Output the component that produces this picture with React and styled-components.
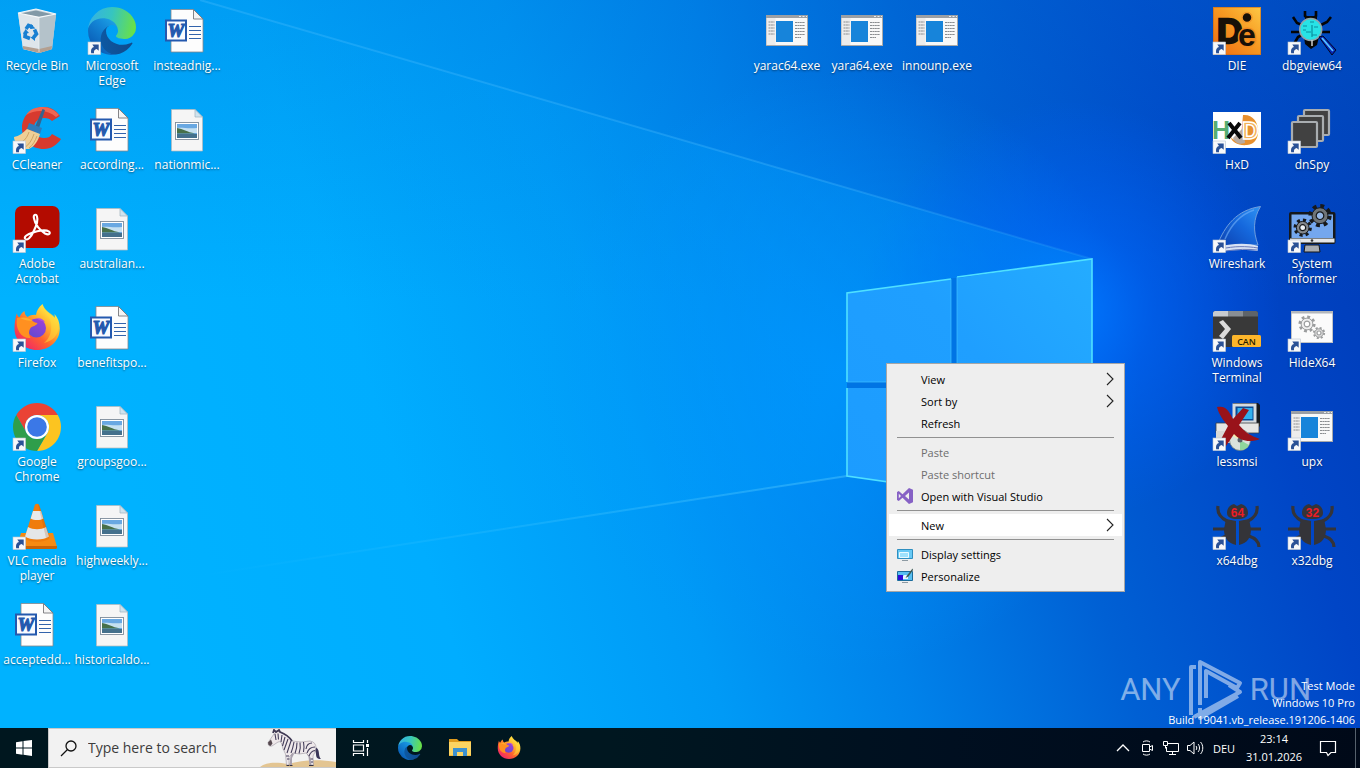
import React from "react";
import styled, { createGlobalStyle } from "styled-components";

const uiFont = '"Open Sans", "Noto Sans", sans-serif';

const GlobalStyle = createGlobalStyle`
  * { box-sizing: border-box; }
  html, body { margin: 0; padding: 0; }
  body { font-family: ${uiFont}; font-size: 11px; background: #0078d7; }
  button, input { font: inherit; }
`;

/* ---------- page frame ---------- */

const Screen = styled.div`
  position: relative;
  isolation: isolate;
  display: flex;
  flex-direction: column;
  min-height: 100vh;
  overflow: hidden;
`;

const WallpaperSvg = styled.svg`
  position: absolute;
  inset: 0;
  z-index: -1;
  width: 100%;
  height: 100%;
`;

const Desktop = styled.main`
  flex: 1;
  display: grid;
  grid-template-columns: repeat(auto-fill, 75px);
  grid-template-rows: repeat(7, 99px);
`;

/* ---------- desktop icons ---------- */

const Shortcut = styled.button`
  grid-column: ${(p) => p.$col};
  grid-row: ${(p) => p.$row};
  display: flex;
  flex-direction: column;
  align-items: center;
  gap: 3px;
  padding: 7px 1px 0 0;
  border: 0;
  background: none;
  color: #fff;
`;

const ShortcutArt = styled.svg`
  display: block;
  width: 48px;
  height: 48px;
  flex: none;
  overflow: visible;
`;

const ShortcutLabel = styled.span`
  font-size: 12px;
  line-height: 15px;
  text-align: center;
  text-shadow: 0 1px 2px rgba(0, 0, 0, 0.5);
`;

/* ---------- context menu ---------- */

const Menu = styled.ul`
  position: absolute;
  left: 886px;
  top: 363px;
  width: 239px;
  margin: 0;
  padding: 4px 2px;
  list-style: none;
  background: #eeeeee;
  border: 1px solid #a6a6a6;
`;

const MenuRow = styled.li`
  display: block;
`;

const MenuButton = styled.button`
  display: grid;
  grid-template-columns: 16px 1fr 8px;
  align-items: center;
  column-gap: 8px;
  width: 100%;
  height: 22px;
  padding: 0 8px;
  border: 0;
  text-align: left;
  color: #000;
  background: ${(p) => (p.$active ? "#fff" : "transparent")};
  &:disabled { color: #6d6d6d; }
`;

const MenuSlot = styled.svg`
  display: block;
  width: ${(p) => p.$w}px;
  height: 16px;
`;

const MenuLine = styled.li`
  height: 1px;
  margin: 3px 8px;
  background: #919191;
`;

/* ---------- watermark and build text ---------- */

const Watermark = styled.div`
  position: absolute;
  right: 49px;
  bottom: 47px;
  display: flex;
  align-items: center;
  gap: 7px;
  color: rgba(255, 255, 255, 0.5);
  font-family: "Liberation Sans Narrow", "Roboto", sans-serif;
  font-size: 31px;
  font-weight: 400;
  line-height: 40px;
`;

const WatermarkMark = styled.svg`
  display: block;
  width: 55px;
  height: 63px;
`;

const BuildInfo = styled.div`
  position: absolute;
  right: 5px;
  bottom: 40px;
  display: grid;
  justify-items: end;
  color: #fff;
  line-height: 17px;
`;

/* ---------- taskbar ---------- */

const Taskbar = styled.footer`
  display: flex;
  align-items: stretch;
  height: 40px;
  color: #fff;
  background: linear-gradient(90deg, #00171f, #001720 45%, #000f20 70%, #000918);
`;

const TaskButton = styled.button`
  display: grid;
  place-items: center;
  width: ${(p) => p.$w}px;
  padding: 0;
  border: 0;
  color: #fff;
  background: none;
`;

const BarIcon = styled.svg`
  display: block;
  width: ${(p) => p.$s}px;
  height: ${(p) => p.$s}px;
`;

const SearchBox = styled.label`
  display: flex;
  align-items: center;
  width: 288px;
  padding-left: 11px;
  background: #f2f2f2;
  border: 1px solid #c9c9c9;
  border-right: 0;
`;

const SearchInput = styled.input`
  flex: 1;
  min-width: 0;
  margin-left: 10px;
  padding: 0;
  border: 0;
  outline: 0;
  background: none;
  font-size: 14px;
  line-height: 20px;
  &::placeholder { color: #3c3c3c; opacity: 1; }
`;

const ZebraArt = styled.svg`
  display: block;
  width: 76px;
  height: 38px;
`;

const Tray = styled.div`
  display: flex;
  align-items: stretch;
  margin-left: auto;
`;

const Clock = styled.time`
  display: grid;
  align-content: center;
  justify-items: center;
  width: 66px;
  line-height: 18px;
`;

const ShowDesktop = styled.button`
  width: 5px;
  margin-left: 6px;
  padding: 0;
  border: 0;
  border-left: 1px solid #56616c;
  background: none;
`;

/* ---------- icon drawings, each on a 48 x 48 field ---------- */

const ShortcutArrow = () => (
  <g>
    <rect x="0" y="35" width="12.600" height="12.600" fill="#f7f8fa" stroke="#b9c4cf" strokeWidth=".6" />
    <path d="M3.200 46.200C2.600 42.200 4 40.500 6 40L4.300 37.600h6.400v6.200l-2-1.900C6.800 42.200 5.600 43.600 6 46.200z" fill="#2a5196" />
  </g>
);

const RecycleBin = () => (
  <g>
    <path d="M5 6l18-4 20 5-4 35-13 4-16-4z" fill="#c9d5dc" />
    <path d="M5 6l21 4v36l-16-4z" fill="#dfe6ea" opacity=".95" />
    <path d="M26 10l17-3-4 35-13 4z" fill="#b4c2ca" />
    <path d="M7 6.500L23 3.500l17 4-14 2.500z" fill="#8299a7" />
    <path d="M10 39l16 3 13-3-.5 3.500-12.500 3.500-16-4z" fill="#b39f90" />
    <path d="M5 6l18-4 20 5-17 3.300z" fill="none" stroke="#f5f8fa" strokeWidth="1.200" />
    <path d="M26 11v34" stroke="#eef2f4" strokeWidth=".7" />
    <g fill="none" stroke="#1980d2" strokeWidth="3.600">
      <path d="M13 22l2.500-3.500 4 1.500" />
      <path d="M21.500 22.500l2 4.500-3 3.500" />
      <path d="M17 31.500l-5-2 .5-4.500" />
    </g>
    <path d="M18 17l4.500 4.500-5.500.5zM22 28v6l-4.500-3.500zM10 27l2.500-5 3.500 4z" fill="#1980d2" />
  </g>
);

const EdgeMark = ({ id }) => (
  <>
    <defs>
      <linearGradient id={`${id}a`} x1="63" y1="178" x2="241" y2="178" gradientUnits="userSpaceOnUse">
        <stop stopColor="#0c59a4" />
        <stop offset="1" stopColor="#114a8b" />
      </linearGradient>
      <linearGradient id={`${id}b`} x1="157" y1="103" x2="46" y2="225" gradientUnits="userSpaceOnUse">
        <stop stopColor="#1b9de2" />
        <stop offset=".3" stopColor="#1488d8" />
        <stop offset="1" stopColor="#0a5fb8" />
      </linearGradient>
      <linearGradient id={`${id}c`} x1="20" y1="60" x2="250" y2="110" gradientUnits="userSpaceOnUse">
        <stop stopColor="#35b3e0" />
        <stop offset=".45" stopColor="#36c5c0" />
        <stop offset="1" stopColor="#68e04a" />
      </linearGradient>
    </defs>
    <g transform="scale(.1875) translate(-4.63 -4.92)">
      <path fill={`url(#${id}a)`} d="M235.680 195.460a93.730 93.730 0 0 1-10.540 4.710 101.870 101.870 0 0 1-35.900 6.460c-47.320 0-88.540-32.550-88.540-74.320A31.480 31.480 0 0 1 117.130 105c-42.800 1.800-53.800 46.400-53.800 72.530 0 73.880 68.090 81.370 82.760 81.370 7.910 0 19.840-2.300 27-4.560l1.310-.44a128.340 128.340 0 0 0 66.600-52.800 4 4 0 0 0-5.320-5.640z" />
      <path fill={`url(#${id}b)`} d="M110.340 246.340A79.200 79.200 0 0 1 87.600 225a80.720 80.720 0 0 1 29.530-120c3.120-1.470 8.450-4.130 15.540-4a32.350 32.350 0 0 1 25.690 13 31.880 31.880 0 0 1 6.360 18.660c0-.21 24.460-79.600-80-79.600-43.900 0-80 41.660-80 78.210a130.150 130.150 0 0 0 12.110 56 128 128 0 0 0 156.380 67.110 75.550 75.550 0 0 1-62.780-8z" />
      <path fill={`url(#${id}c)`} d="M156.940 153.780c-.81 1.050-3.300 2.500-3.300 5.660 0 2.610 1.700 5.120 4.720 7.230 14.380 10 41.490 8.680 41.560 8.680a59.560 59.560 0 0 0 30.270-8.350 61.380 61.380 0 0 0 30.430-52.880c.26-22.410-8-37.310-11.340-43.910-21.190-41.450-66.930-65.290-116.670-65.290a128 128 0 0 0-128 126.200c.48-36.540 36.800-66.050 80-66.050 3.500 0 23.460.34 42 10.070 16.340 8.580 24.900 18.940 30.850 29.210 6.180 10.670 7.280 24.150 7.280 29.520s-2.740 13.330-7.800 19.910z" />
    </g>
  </>
);

const FirefoxMark = ({ id }) => (
  <>
    <defs>
      <linearGradient id={`${id}a`} x1="42" y1="8" x2="10" y2="44" gradientUnits="userSpaceOnUse">
        <stop stopColor="#fff04a" />
        <stop offset=".3" stopColor="#ffb52e" />
        <stop offset=".6" stopColor="#ff642c" />
        <stop offset="1" stopColor="#f0226c" />
      </linearGradient>
      <linearGradient id={`${id}b`} x1="30" y1="14" x2="18" y2="34" gradientUnits="userSpaceOnUse">
        <stop stopColor="#a040d8" />
        <stop offset="1" stopColor="#5f4ad0" />
      </linearGradient>
    </defs>
    <path fill={`url(#${id}a)`} d="M29.500 0c-4 3-6 7-6.500 11-3-.5-6 .5-8.500 2-2-1.500-3-3.500-3-6C8.500 9 7 11.500 6.500 13.500 5 12.500 4 11 4 9 2.500 13 1.500 19 1.500 24.500c0 12 10 21.500 22.500 21.500s22.800-9 22.800-21.500c0-6-2-11-5.300-14.500l.5 4C37 9 31.500 7 29.500 0z" />
    <path fill="#ffd83a" d="M29.500 0c-1 8 7 10 8.500 19 1 8-1 15-7 20 9-2 14-8 14.500-15 0-5-1-8-3.500-11-4-4-10-6-12.500-13z" opacity=".55" />
    <circle cx="23.500" cy="24" r="9.500" fill={`url(#${id}b)`} />
    <path fill="#b04fe0" d="M24 14.500c3-1 7 1 8 4-3-2-6-2-8-4z" />
    <path fill="#ff9020" d="M4 14c5-1 10-1 14 1 1 2 3 3.500 6.500 4-1 3-5 3-7 5-2 3-2 6 0 10C9 35 2 26 4 14z" />
    <path fill="#ffbf36" opacity=".6" d="M7 14c5-1 9 0 13 3-5 0-9-1-13-3z" />
  </>
);

const CCleaner = () => (
  <g>
    <path d="M47 10C43 4 37 1 31 1 18 1 9 10 9 22s9 21 22 21c7 0 13-4 17-10l-9-5c-2 3-4 4-8 4-6 0-10-5-10-10.500S26 12 31 12c4 0 6 1 8 3z" fill="#d73a2e" />
    <path d="M13 9c4-6 10-8 17-8 6 0 12 3 16 8l-3 2C34 3 22 4 13 9z" fill="#ef6652" />
    <path d="M29.500 3l2.500 1-6 18-4-1z" fill="#35648f" />
    <path d="M16 17l13 5-2 6-13-5z" fill="#2f7cbc" />
    <path d="M14 23l13 5c-2 7-5 12-11 15H5C3 37 1 34 1 31c5-1 9-4 13-8z" fill="#efcf96" />
    <path d="M16 26c-2 6-5 9-9 11M21 28c-2 6-5 11-10 14M24 30c-2 5-4 9-8 12" stroke="#cfa463" fill="none" />
  </g>
);

const Acrobat = () => (
  <g>
    <rect x="2" y="1" width="44.500" height="42" rx="7" fill="#b30b00" />
    <path d="M12 33c2 3 6-1 9-8 3-6 4-11 3-14-1-3-4-2-3 2 1 6 6 12 11 15 4 2 6 0 4-2-3-2-11-1-16 1-6 2-9 4-8 6z" transform="translate(0 .5)" fill="none" stroke="#fff" strokeWidth="2.100" />
  </g>
);

const Chrome = () => (
  <g>
    <path fill="#ea4335" d="M24 12H44.780A24 24 0 0 0 3.220 12L13.610 30A12 12 0 0 1 24 12z" />
    <path fill="#fcc420" d="M44.780 12A24 24 0 0 1 24 48L34.390 30A12 12 0 0 0 24 12z" />
    <path fill="#2f9e4b" d="M3.220 12A24 24 0 0 0 24 48L34.390 30A12 12 0 0 1 13.610 30z" />
    <circle cx="24" cy="24" r="12" fill="#fff" />
    <circle cx="24" cy="24" r="9.800" fill="#3b78e7" />
  </g>
);

const Vlc = () => (
  <g>
    <path d="M8 31h32l4 14c0 1-1 2-2 2H6c-1 0-2-1-2-2z" fill="#f68a12" />
    <path d="M4 44h40v1.500c0 1-1 1.500-2 1.500H6z" fill="#c96306" />
    <path d="M21.500 4c.5-3 4.500-3 5 0l10 32c-3 5-22 5-25 0z" fill="#f07c0c" />
    <path d="M20 9h8l2.300 7.500c-3 2-9.500 2-12.600 0z" fill="#e9eaeb" />
    <path d="M15 25c5 3 13 3 18 0l3 9.500c-5 4-19 4-24 0z" fill="#e4e6e8" />
    <path d="M25 2l8 34c2-1 3-1 3.500-2L26.500 4z" fill="#a54c00" opacity=".2" />
  </g>
);

const WordDoc = () => (
  <g>
    <path d="M8 2.500h22.500L40 12v33H8z" fill="#fdfdfd" stroke="#86868a" strokeWidth=".8" />
    <path d="M30.500 2.500V12H40z" fill="#f4f4f4" stroke="#77777a" strokeWidth=".9" />
    <path d="M26 19.500h12M26 23.500h12M26 27.500h12M26 31.500h12" stroke="#3263ac" strokeWidth="1.100" />
    <rect x="3" y="13.500" width="20" height="20" fill="#f8faff" stroke="#2459ae" strokeWidth="2" />
    <text x="13" y="30" textAnchor="middle" fontFamily="Liberation Serif, serif" fontStyle="italic" fontWeight="700" fontSize="19" fill="#2459ae" stroke="#2459ae" strokeWidth="1.200">W</text>
  </g>
);

const ImageDoc = () => (
  <g>
    <path d="M8.500 3.500h23.500l7.500 7.500v34h-31z" fill="#f5f5f5" stroke="#b9b9b9" strokeWidth=".7" />
    <path d="M32 3.500V11h7.500z" fill="#cfe3ee" stroke="#9fb2bf" strokeWidth=".7" />
    <rect x="12.500" y="16.500" width="23" height="17" fill="#fff" stroke="#7d8c9a" strokeWidth=".9" />
    <rect x="14" y="18" width="20" height="14" fill="#69a8e2" />
    <path d="M14 22c5-1 10 1 20 0v5H14z" fill="#c5e0f1" />
    <path d="M14 22c6 1 10 4 18 5.500H14z" fill="#47704a" />
    <path d="M14 28h20v4H14z" fill="#44708c" />
  </g>
);

const ExeWindow = () => (
  <g>
    <rect x="3.500" y="8.500" width="41" height="30" fill="#f8f8f8" stroke="#a9a9a9" />
    <path d="M3 8h42v3H3z" fill="#9a9fa5" />
    <path d="M36 9.500h2m1.500 0h2m1.500 0h1" stroke="#e9ecef" />
    <path d="M3.500 11h9v27h-9z" fill="#ececec" />
    <rect x="13" y="14" width="17" height="21" fill="#1784da" />
    <path d="M5.500 15h6m-6 3h6m-6 3h6m-6 3h6m-6 3h6M32 15.500h10m-10 3h10m-10 3h10m-10 3h10m-10 3h10m-10 3h6" stroke="#8a8d90" strokeWidth="1.100" strokeDasharray="2 .4" />
  </g>
);

const Die = () => (
  <g>
    <defs>
      <linearGradient id="die" x1="0" y1="1" x2="1" y2="0">
        <stop stopColor="#ef6a12" />
        <stop offset=".55" stopColor="#f79a22" />
        <stop offset="1" stopColor="#fdc845" />
      </linearGradient>
    </defs>
    <rect width="48" height="48" fill="url(#die)" />
    <rect x=".5" y=".5" width="47" height="47" fill="none" stroke="#c56a1c" opacity=".6" />
    <text x="4" y="36" fontFamily="Liberation Sans, sans-serif" fontWeight="700" fontSize="35" fill="#171008" stroke="#171008" strokeWidth="2.400">D</text>
    <text x="25" y="39" fontFamily="Liberation Sans, sans-serif" fontWeight="700" fontSize="32" fill="#171008" stroke="#f18a20" strokeWidth="3" paintOrder="stroke">e</text>
    <circle cx="34" cy="10.500" r="5" fill="#171008" stroke="#f39a2a" strokeWidth="1.500" />
  </g>
);

const DebugView = () => (
  <g>
    <path d="M17 4v5l4 4M28 4v5l-4 4M5 10l4 6 5 2M43 10l-4 5-6 3M3 25h9M42 25h-9M6 37l4-7 4-2" fill="none" stroke="#050505" strokeWidth="2.600" />
    <path d="M17 9h12v5H17zM16 30h15l-2 8-6 4-6-5z" fill="#080808" />
    <circle cx="22.700" cy="22.500" r="11" fill="#27e3e6" stroke="#93a2a8" strokeWidth="1.500" />
    <path d="M15 19h4m3-4h4m-8 10h5m3-5h4m-6 8h5m-14-5h3m6-5v12" stroke="#0a8f9e" strokeWidth="1.200" />
    <path d="M31 30l4-1 13 14-4 5z" fill="#0726b8" stroke="#03071f" />
    <path d="M34 31l11 13" stroke="#56c5ff" strokeWidth="1.800" />
    <path d="M24 33v6" stroke="#cfcfcf" strokeWidth="1.500" />
  </g>
);

const HxD = () => (
  <g>
    <path d="M0 6h48v36H0z" fill="#fff" />
    <path d="M30 9c18-2 21 29 4 30-8 1-16-3-16-8 2 4 8 4 10 0z" fill="#e7902f" />
    <path d="M20 32l10-10 2 15c-6 2-10 0-12-5z" fill="#b9aba0" />
    <text x="-1" y="33" fontFamily="Liberation Sans, sans-serif" fontWeight="700" fontSize="25" fill="#57ad73">H</text>
    <text x="29" y="33" fontFamily="Liberation Sans, sans-serif" fontWeight="700" fontSize="23" fill="#f3b15b" stroke="#fff" strokeWidth="1.500">D</text>
    <path d="M16 17l12 15M27 17L15 32" stroke="#080808" strokeWidth="4" />
  </g>
);

const DnSpy = () => (
  <g fill="#414141" stroke="#a9adb0" strokeWidth="2.200">
    <rect x="16" y="4" width="25" height="25" rx="1" />
    <rect x="10" y="10" width="25" height="25" rx="1" />
    <rect x="4" y="16" width="25" height="25" rx="1" />
  </g>
);

const Wireshark = () => (
  <g>
    <defs>
      <linearGradient id="fin" x1="0" y1="1" x2="1" y2="0">
        <stop stopColor="#0c3fae" />
        <stop offset=".55" stopColor="#1568dd" />
        <stop offset="1" stopColor="#2f93f4" />
      </linearGradient>
    </defs>
    <path d="M47.500 1.500C24 5 12 20 4 41l41-1c-5-14-5-26 2.500-38.500z" fill="url(#fin)" stroke="#6f9ede" strokeWidth="1" />
    <path d="M41 5C26 10 18 20 12 34" stroke="#74b3fa" strokeWidth="1.500" fill="none" opacity=".6" />
    <path d="M3 42c13-3 30-5 42-1l-.5 5C32 44 16 45 4 47z" fill="#d8e2f4" />
    <path d="M8 44c13-3 25-3 37-1M13 46c12-2 22-2 31-1" stroke="#5c6fb3" fill="none" strokeWidth=".9" />
  </g>
);

const Gear = ({ x, y, r, fill, line, hole }) => (
  <g transform={`translate(${x} ${y})`}>
    <circle r={r} fill="none" stroke={line} strokeWidth={r * 0.45} strokeDasharray={`${r * 0.4} ${r * 0.385}`} />
    <circle r={r * 0.84} fill={fill} stroke={line} strokeWidth="1" />
    <circle r={r * 0.4} fill={hole} stroke={line} strokeWidth="1.200" />
  </g>
);

const SystemInformer = () => (
  <g>
    <path d="M17 40h14l1 7H16z" fill="#a9adb1" stroke="#14171a" />
    <rect x="1" y="7" width="46.500" height="32" rx="2" fill="#15181b" />
    <rect x="3.500" y="9.500" width="41.500" height="23.500" fill="#74a7ee" />
    <path d="M2 33.500h44.500v4H2z" fill="#e4e6e8" />
    <circle cx="24" cy="35.500" r="1.300" fill="#333" />
    <Gear x={14.7} y={22.7} r={7.5} fill="#83878b" line="#17191b" hole="#eef2f5" />
    <Gear x={32} y={10.700} r={9.500} fill="#6f7478" line="#17191b" hole="#96b7e6" />
  </g>
);

const Terminal = () => (
  <g>
    <path d="M0 9c0-1 1-2 2-2h41c1 0 2 1 2 2v32c0 1-1 2-2 2H2c-1 0-2-1-2-2z" fill="#393939" />
    <path d="M0 12.500V9c0-1 1-2 2-2h13v5.500z" fill="#c7cbcf" />
    <path d="M15 7h15v5.500H15z" fill="#8a8f94" />
    <path d="M30 7h13c1 0 2 1 2 2v3.500H30z" fill="#5f6469" />
    <path d="M6 18l4-2 8 9-8 10-4-3 6-7z" fill="#dcdcdc" />
    <rect x="19" y="31" width="29" height="12" rx="1.500" fill="#fdb62b" />
    <text x="33.500" y="40.500" textAnchor="middle" fontFamily="Open Sans, sans-serif" fontWeight="600" fontSize="9" fill="#2a1c00">CAN</text>
  </g>
);

const HideX = () => (
  <g>
    <rect x="3.500" y="7.500" width="41" height="31" fill="#fbfbfb" stroke="#c2c4c6" />
    <path d="M3 7h42v2.500H3z" fill="#b3b7bc" />
    <Gear x={19} y={20} r={7} fill="#efefef" line="#9b9d9e" hole="#fff" />
    <Gear x={31} y={29} r={5} fill="#dedede" line="#9b9d9e" hole="#fff" />
  </g>
);

const LessMsi = () => (
  <g>
    <path d="M20 0h25l2 2v21l-2 2H20z" fill="#15191f" />
    <path d="M19.500.5h24v22h-24z" fill="#d5dbe0" />
    <path d="M22.500 3.500h18v14h-18z" fill="#0a4b95" />
    <path d="M24.500 5h15v11h-15z" fill="#31b0ee" />
    <path d="M3 20h43v10H3z" fill="#e6e6e4" stroke="#3c3f42" strokeWidth=".8" />
    <path d="M3 28h24v12H3z" fill="#d8d8d6" />
    <circle cx="27" cy="37" r="10.500" fill="#d9e3dc" stroke="#6f7f7a" strokeWidth=".8" />
    <path d="M27 37l9 5c-2 4-6 5-9 5z" fill="#8fd79c" />
    <path d="M27 37l-9-5c2-4 5-5 9-5.500z" fill="#f3edaf" />
    <circle cx="27" cy="37" r="2.500" fill="#576069" />
    <path d="M4 4c5-1 9 0 12 5l4 7 10-11 6 2-10 15c7 8 12 11 21 14-10 4-20 2-26-5L11 46l-5-6 9-17C11 18 6 12 4 4z" fill="#99131a" />
  </g>
);

const Beetle = ({ num }) => (
  <g>
    <g fill="none" stroke="#343439" strokeWidth="3.200">
      <path d="M5 4c-1 7 3 12 9 15M44 4c1 7-3 12-9 15M0 27h14M48 27H34M4 45c0-6 3-9 9-11M46 45c0-6-4-9-10-11" />
    </g>
    <path d="M14 11c0-5 3-8 7-9l3 2 4-2c4 1 7 4 7 9 0 4-4 6-10.500 6S14 15 14 11z" fill="#343439" />
    <path d="M13 17l10 2v24c-9-2-12-8-12-16zM36 17l-10 2v24c9-2 12-8 12-16z" fill="#343439" />
    <text x="24.500" y="15" textAnchor="middle" fontFamily="Liberation Sans, sans-serif" fontWeight="700" fontSize="12" fill="#ed1c24">{num}</text>
  </g>
);

const EdgeIcon = () => <EdgeMark id="edgeDesk" />;
const FirefoxIcon = () => <FirefoxMark id="foxDesk" />;
const Beetle64 = () => <Beetle num="64" />;
const Beetle32 = () => <Beetle num="32" />;

const shortcuts = [
  { col: 1, row: 1, label: "Recycle Bin", Art: RecycleBin },
  { col: 1, row: 2, label: "CCleaner", Art: CCleaner, link: true },
  { col: 1, row: 3, label: "Adobe Acrobat", Art: Acrobat, link: true },
  { col: 1, row: 4, label: "Firefox", Art: FirefoxIcon, link: true },
  { col: 1, row: 5, label: "Google Chrome", Art: Chrome, link: true },
  { col: 1, row: 6, label: "VLC media player", Art: Vlc, link: true },
  { col: 1, row: 7, label: "acceptedd...", Art: WordDoc },
  { col: 2, row: 1, label: "Microsoft Edge", Art: EdgeIcon, link: true },
  { col: 2, row: 2, label: "according...", Art: WordDoc },
  { col: 2, row: 3, label: "australian...", Art: ImageDoc },
  { col: 2, row: 4, label: "benefitspo...", Art: WordDoc },
  { col: 2, row: 5, label: "groupsgoo...", Art: ImageDoc },
  { col: 2, row: 6, label: "highweekly...", Art: ImageDoc },
  { col: 2, row: 7, label: "historicaldo...", Art: ImageDoc },
  { col: 3, row: 1, label: "insteadnig...", Art: WordDoc },
  { col: 3, row: 2, label: "nationmic...", Art: ImageDoc },
  { col: 11, row: 1, label: "yarac64.exe", Art: ExeWindow },
  { col: 12, row: 1, label: "yara64.exe", Art: ExeWindow },
  { col: 13, row: 1, label: "innounp.exe", Art: ExeWindow },
  { col: 17, row: 1, label: "DIE", Art: Die, link: true },
  { col: 17, row: 2, label: "HxD", Art: HxD, link: true },
  { col: 17, row: 3, label: "Wireshark", Art: Wireshark, link: true },
  { col: 17, row: 4, label: "Windows Terminal", Art: Terminal, link: true },
  { col: 17, row: 5, label: "lessmsi", Art: LessMsi, link: true },
  { col: 17, row: 6, label: "x64dbg", Art: Beetle64, link: true },
  { col: 18, row: 1, label: "dbgview64", Art: DebugView, link: true },
  { col: 18, row: 2, label: "dnSpy", Art: DnSpy, link: true },
  { col: 18, row: 3, label: "System Informer", Art: SystemInformer, link: true },
  { col: 18, row: 4, label: "HideX64", Art: HideX, link: true },
  { col: 18, row: 5, label: "upx", Art: ExeWindow, link: true },
  { col: 18, row: 6, label: "x32dbg", Art: Beetle32, link: true },
];

/* ---------- wallpaper ---------- */

const Wallpaper = () => (
  <WallpaperSvg viewBox="0 0 1360 768" preserveAspectRatio="xMidYMid slice" aria-hidden="true">
    <defs>
      <linearGradient id="sky" x1="150" y1="560" x2="1400" y2="160" gradientUnits="userSpaceOnUse">
        <stop stopColor="#00b2ff" />
        <stop offset=".2" stopColor="#00adff" />
        <stop offset=".38" stopColor="#009af6" />
        <stop offset=".52" stopColor="#0082ea" />
        <stop offset=".68" stopColor="#0060d4" />
        <stop offset=".85" stopColor="#0045c6" />
        <stop offset="1" stopColor="#003bb6" />
      </linearGradient>
      <linearGradient id="topShade" x1="0" y1="0" x2="0" y2="300" gradientUnits="userSpaceOnUse">
        <stop stopColor="#0072d6" stopOpacity=".28" />
        <stop offset="1" stopColor="#0072d6" stopOpacity="0" />
      </linearGradient>
      <radialGradient id="glow" cx="1070" cy="310" r="210" gradientUnits="userSpaceOnUse">
        <stop stopColor="#0078ff" stopOpacity=".95" />
        <stop offset=".4" stopColor="#0068ff" stopOpacity=".5" />
        <stop offset="1" stopColor="#0060ff" stopOpacity="0" />
      </radialGradient>
      <radialGradient id="leftGlow" cx="840" cy="370" r="300" gradientUnits="userSpaceOnUse">
        <stop stopColor="#0092ff" stopOpacity=".75" />
        <stop offset="1" stopColor="#0096ff" stopOpacity="0" />
      </radialGradient>
      <linearGradient id="ray" x1="200" y1="0" x2="1092" y2="259" gradientUnits="userSpaceOnUse">
        <stop stopColor="#52c0ff" stopOpacity=".3" />
        <stop offset=".7" stopColor="#52c0ff" stopOpacity=".3" />
        <stop offset="1" stopColor="#52c0ff" stopOpacity=".15" />
      </linearGradient>
      <linearGradient id="lowRay" x1="200" y1="575" x2="847" y2="476" gradientUnits="userSpaceOnUse">
        <stop stopColor="#5cd0ff" stopOpacity="0" />
        <stop offset="1" stopColor="#5cd0ff" stopOpacity=".4" />
      </linearGradient>
      <linearGradient id="beam" x1="200" y1="0" x2="900" y2="0" gradientUnits="userSpaceOnUse">
        <stop stopColor="#00b4ff" stopOpacity="0" />
        <stop offset="1" stopColor="#00a2ff" stopOpacity=".28" />
      </linearGradient>
      <linearGradient id="pane" x1="847" y1="480" x2="1092" y2="260" gradientUnits="userSpaceOnUse">
        <stop stopColor="#1c9cff" />
        <stop offset=".55" stopColor="#1f9fff" />
        <stop offset="1" stopColor="#24acff" />
      </linearGradient>
    </defs>
    <path d="M0 0h1360v768H0z" fill="url(#sky)" />
    <path d="M0 0h1360v300H0z" fill="url(#topShade)" />
    <path d="M0 0h1360v768H0z" fill="url(#leftGlow)" />
    <path d="M0 0h1360v768H0z" fill="url(#glow)" />
    <path d="M200 0l892 259-245 217L0 606V0z" fill="url(#beam)" />
    <path d="M200 0l892 259" stroke="url(#ray)" strokeWidth="2" />
    <path d="M847 476L120 588" stroke="url(#lowRay)" strokeWidth="2" />
    <path d="M847 293l245-34v252l-245-35z" fill="#0074e4" />
    <path d="M847 293l104-14v103H847zM957 278l135-19v123H957zM847 388h104v103l-104-15zM957 388h135v123l-135-19z" fill="url(#pane)" />
    <path d="M1092 382V259l-135 18M951 279l-104 14v89M847 388v88l104 15" fill="none" stroke="#4fe0ff" strokeWidth="1.600" />
    <path d="M951 279v103H847M957 277v105" fill="none" stroke="#3fc0ff" strokeWidth="1" opacity=".7" />
  </WallpaperSvg>
);

/* ---------- menu drawings ---------- */

const Chevron = () => (
  <MenuSlot $w={8} viewBox="0 0 8 16" aria-hidden="true">
    <path d="M1 2l6 6-6 6" fill="none" stroke="#222" strokeWidth="1.100" />
  </MenuSlot>
);

const StudioIcon = () => (
  <MenuSlot $w={16} viewBox="0 0 16 16" aria-hidden="true">
    <path d="M12 0l4 1.700v12.600L12 16 5.500 9.800 1.800 13 0 12V4l1.800-1 3.700 3.200zM12 4.600L8 8l4 3.400zM1.800 5.800v4.400L4 8z" fill="#8661c5" fillRule="evenodd" />
  </MenuSlot>
);

const DisplayIcon = () => (
  <MenuSlot $w={16} viewBox="0 0 16 16" aria-hidden="true">
    <path d="M.5 3.500h15v9H.5z" fill="#67c9f5" stroke="#2f8fc0" />
    <path d="M2.500 6.500h9v5h-9z" fill="#9fe2fc" stroke="#e9faff" />
    <path d="M5 14.500h6" stroke="#8d9aa3" />
  </MenuSlot>
);

const PersonalizeIcon = () => (
  <MenuSlot $w={16} viewBox="0 0 16 16" aria-hidden="true">
    <path d="M.5 3.500h15v9H.5z" fill="#57bff2" stroke="#1c6c9c" />
    <path d="M1 7h5v5H1z" fill="#2d0bd8" />
    <path d="M6 8c2-2 3 0 5-1v4H6z" fill="#e8f6ff" />
    <path d="M15.500.5L10 7.500 8.500 10l3-1.500L16 2z" fill="#3c5a55" />
    <path d="M5 14.500h6" stroke="#8d9aa3" />
  </MenuSlot>
);

const menu = [
  { label: "View", sub: true },
  { label: "Sort by", sub: true },
  { label: "Refresh" },
  null,
  { label: "Paste", off: true },
  { label: "Paste shortcut", off: true },
  { label: "Open with Visual Studio", Icon: StudioIcon },
  null,
  { label: "New", sub: true, active: true },
  null,
  { label: "Display settings", Icon: DisplayIcon },
  { label: "Personalize", Icon: PersonalizeIcon },
];

const ContextMenu = () => (
  <Menu>
    {menu.map((item, i) =>
      item ? (
        <MenuRow key={item.label}>
          <MenuButton type="button" disabled={item.off} $active={item.active}>
            {item.Icon ? <item.Icon /> : <span />}
            <span>{item.label}</span>
            {item.sub && <Chevron />}
          </MenuButton>
        </MenuRow>
      ) : (
        <MenuLine key={i} role="separator" />
      )
    )}
  </Menu>
);

/* ---------- taskbar drawings ---------- */

const Zebra = () => (
  <ZebraArt viewBox="0 0 76 38" aria-hidden="true">
    <path d="M0 38c6-5 16-5 28-3 14-4 30-5 48-2v5z" fill="#e3c592" />
    <path d="M54 18c4 0 5 4 5 7s2 5 2 5c-4 0-5-2-5-5s-2-5-2-7z" fill="#3a3558" />
    <path d="M44 20l5-1 3 8 0 9h-2.500l-1-8zM31 22l3 3-2 4v7h-2.500z" fill="#a9a1ae" />
    <path d="M8 13.500L14 5q3-4 7-2 7 3 11 9 10 2 18 0 6 1 6 7-1 5-3 8l.5 9H51l-1-8-4-4q-7 2-13 0l-4 4v8h-2.500L25.500 25q-3-5-4-11-2-2-3.500-1l-6 4q-4 1-4-3.500z" fill="#eee8ea" stroke="#8d8490" strokeWidth=".5" />
    <path d="M8 13.500l3-3 1.500 4-2 2.500-2-1z" fill="#55484f" />
    <path d="M13 4l1-3 2 2 3-2 1 2q8 3 12 9" fill="none" stroke="#403a54" strokeWidth="1.800" />
    <path d="M15 5l1 6M18 4.500l.5 6M22 6l-1 7M25 8l-2.500 9M28 10l-4 11M31 12l-4 12M34 13q-1 6-3 11M37 13.500q0 6-2 11M40 13.500q1 5-1 11M43.500 13q1 5 0 10M46 20q1-6 6-6M47 24q2-6 8-6M49 27q2-5 6-5.500M26 27h3M27 30h2.500M50.500 30h2.500M51 33h2" stroke="#433d5a" strokeWidth="1.100" fill="none" />
    <path d="M26.500 36.500h3M30 36.500h2.500M49 36.500h4.500" stroke="#33303e" strokeWidth="1.200" />
  </ZebraArt>
);

const StartIcon = () => (
  <BarIcon $s={16} viewBox="0 0 16 16" aria-hidden="true">
    <path d="M0 2.300l6.500-1v6.200H0zM7.500 1.100L16 0v7.500H7.500zM0 8.500h6.500v6.200L0 13.700zM7.500 8.500H16V16l-8.500-1.200z" fill="#fff" />
  </BarIcon>
);

const SearchIcon = () => (
  <BarIcon $s={18} viewBox="0 0 18 18" aria-hidden="true">
    <circle cx="11" cy="7" r="5" fill="none" stroke="#111" strokeWidth="1.300" />
    <path d="M7.500 10.500L1 17" stroke="#111" strokeWidth="1.300" />
  </BarIcon>
);

const TaskViewIcon = () => (
  <BarIcon $s={18} viewBox="0 0 18 18" aria-hidden="true">
    <path d="M1.500 1v2.500h10V1M1.500 17v-2.500h10V17M1.500 6h10v6h-10zM15.500 1v3M15.500 9v8" fill="none" stroke="#fff" strokeWidth="1.200" />
    <path d="M14 5h3v3h-3z" fill="#fff" />
  </BarIcon>
);

const ExplorerIcon = () => (
  <BarIcon $s={24} viewBox="0 0 24 24" aria-hidden="true">
    <path d="M1 3h8l2 2h12v4H1z" fill="#e09b1d" />
    <path d="M1 6h22v14H1z" fill="#fcd462" />
    <path d="M5 12h14v8h-4v-4H9v4H5z" fill="#3d91cf" />
    <path d="M1 19h4v1H1zM19 19h4v1h-4z" fill="#f6b93a" />
  </BarIcon>
);

const ChevronUp = () => (
  <BarIcon $s={16} viewBox="0 0 16 16" aria-hidden="true">
    <path d="M2 11l6-6 6 6" fill="none" stroke="#fff" strokeWidth="1.300" />
  </BarIcon>
);

const CameraIcon = () => (
  <BarIcon $s={16} viewBox="0 0 16 16" aria-hidden="true">
    <path d="M3.500 4.500h7v7h-7zM10.500 7l3-1.500v5l-3-1.500M4 2c2-1.500 5-1.500 7 0M4 14c2 1.500 5 1.500 7 0" fill="none" stroke="#fff" />
  </BarIcon>
);

const NetworkIcon = () => (
  <BarIcon $s={18} viewBox="0 0 18 18" aria-hidden="true">
    <path d="M6 4.500h10.500v8H4.500V8M10.500 12.500v3M7 15.500h7M1.500 2.500h4v4h-4zM3.500 6.500v3" fill="none" stroke="#fff" />
  </BarIcon>
);

const VolumeIcon = () => (
  <BarIcon $s={18} viewBox="0 0 18 18" aria-hidden="true">
    <path d="M1.500 6.500h2.500l4-3.500v12l-4-3.500H1.500zM10 7c1 1 1 3 0 4M12 5c2 2 2 6 0 8M14.500 3c3 3 3 9 0 12" fill="none" stroke="#fff" />
  </BarIcon>
);

const NoticeIcon = () => (
  <BarIcon $s={18} viewBox="0 0 18 18" aria-hidden="true">
    <path d="M1.500 2.500h15v11H12L9 16.500l-1.500-3h-6z" fill="none" stroke="#fff" strokeWidth="1.200" />
  </BarIcon>
);

export default function App() {
  return (
    <Screen>
      <GlobalStyle />
      <Wallpaper />
      <Desktop>
        {shortcuts.map(({ col, row, label, Art, link }) => (
          <Shortcut key={label} type="button" $col={col} $row={row}>
            <ShortcutArt viewBox="0 0 48 48" aria-hidden="true">
              <Art />
              {link && <ShortcutArrow />}
            </ShortcutArt>
            <ShortcutLabel>{label}</ShortcutLabel>
          </Shortcut>
        ))}
      </Desktop>
      <Watermark>
        <span>ANY</span>
        <WatermarkMark viewBox="0 0 55 63" aria-hidden="true">
          <path d="M8 9H3v48M12 47V4l40 21-3 5-31-17v27M6 59l46-25-11-7M12 50v10l38-22" fill="none" stroke="currentColor" strokeWidth="4" strokeLinejoin="round" />
        </WatermarkMark>
        <span>RUN</span>
      </Watermark>
      <BuildInfo>
        <span>Test Mode</span>
        <span>Windows 10 Pro</span>
        <span>Build 19041.vb_release.191206-1406</span>
      </BuildInfo>
      <ContextMenu />
      <Taskbar>
        <TaskButton type="button" aria-label="Start" $w={48}><StartIcon /></TaskButton>
        <SearchBox>
          <SearchIcon />
          <SearchInput type="text" placeholder="Type here to search" aria-label="Type here to search" />
          <Zebra />
        </SearchBox>
        <TaskButton type="button" aria-label="Task View" $w={49}><TaskViewIcon /></TaskButton>
        <TaskButton type="button" aria-label="Microsoft Edge" $w={50}>
          <BarIcon $s={24} viewBox="0 0 48 48"><EdgeMark id="edgeBar" /></BarIcon>
        </TaskButton>
        <TaskButton type="button" aria-label="File Explorer" $w={49}><ExplorerIcon /></TaskButton>
        <TaskButton type="button" aria-label="Firefox" $w={49}>
          <BarIcon $s={24} viewBox="0 0 48 48"><FirefoxMark id="foxBar" /></BarIcon>
        </TaskButton>
        <Tray>
          <TaskButton type="button" aria-label="Show hidden icons" $w={24}><ChevronUp /></TaskButton>
          <TaskButton type="button" aria-label="Meet Now" $w={24}><CameraIcon /></TaskButton>
          <TaskButton type="button" aria-label="Network" $w={24}><NetworkIcon /></TaskButton>
          <TaskButton type="button" aria-label="Volume" $w={24}><VolumeIcon /></TaskButton>
          <TaskButton type="button" $w={34}>DEU</TaskButton>
          <Clock>
            <span>23:14</span>
            <span>31.01.2026</span>
          </Clock>
          <TaskButton type="button" aria-label="Notifications" $w={42}><NoticeIcon /></TaskButton>
          <ShowDesktop type="button" aria-label="Show desktop" />
        </Tray>
      </Taskbar>
    </Screen>
  );
}
